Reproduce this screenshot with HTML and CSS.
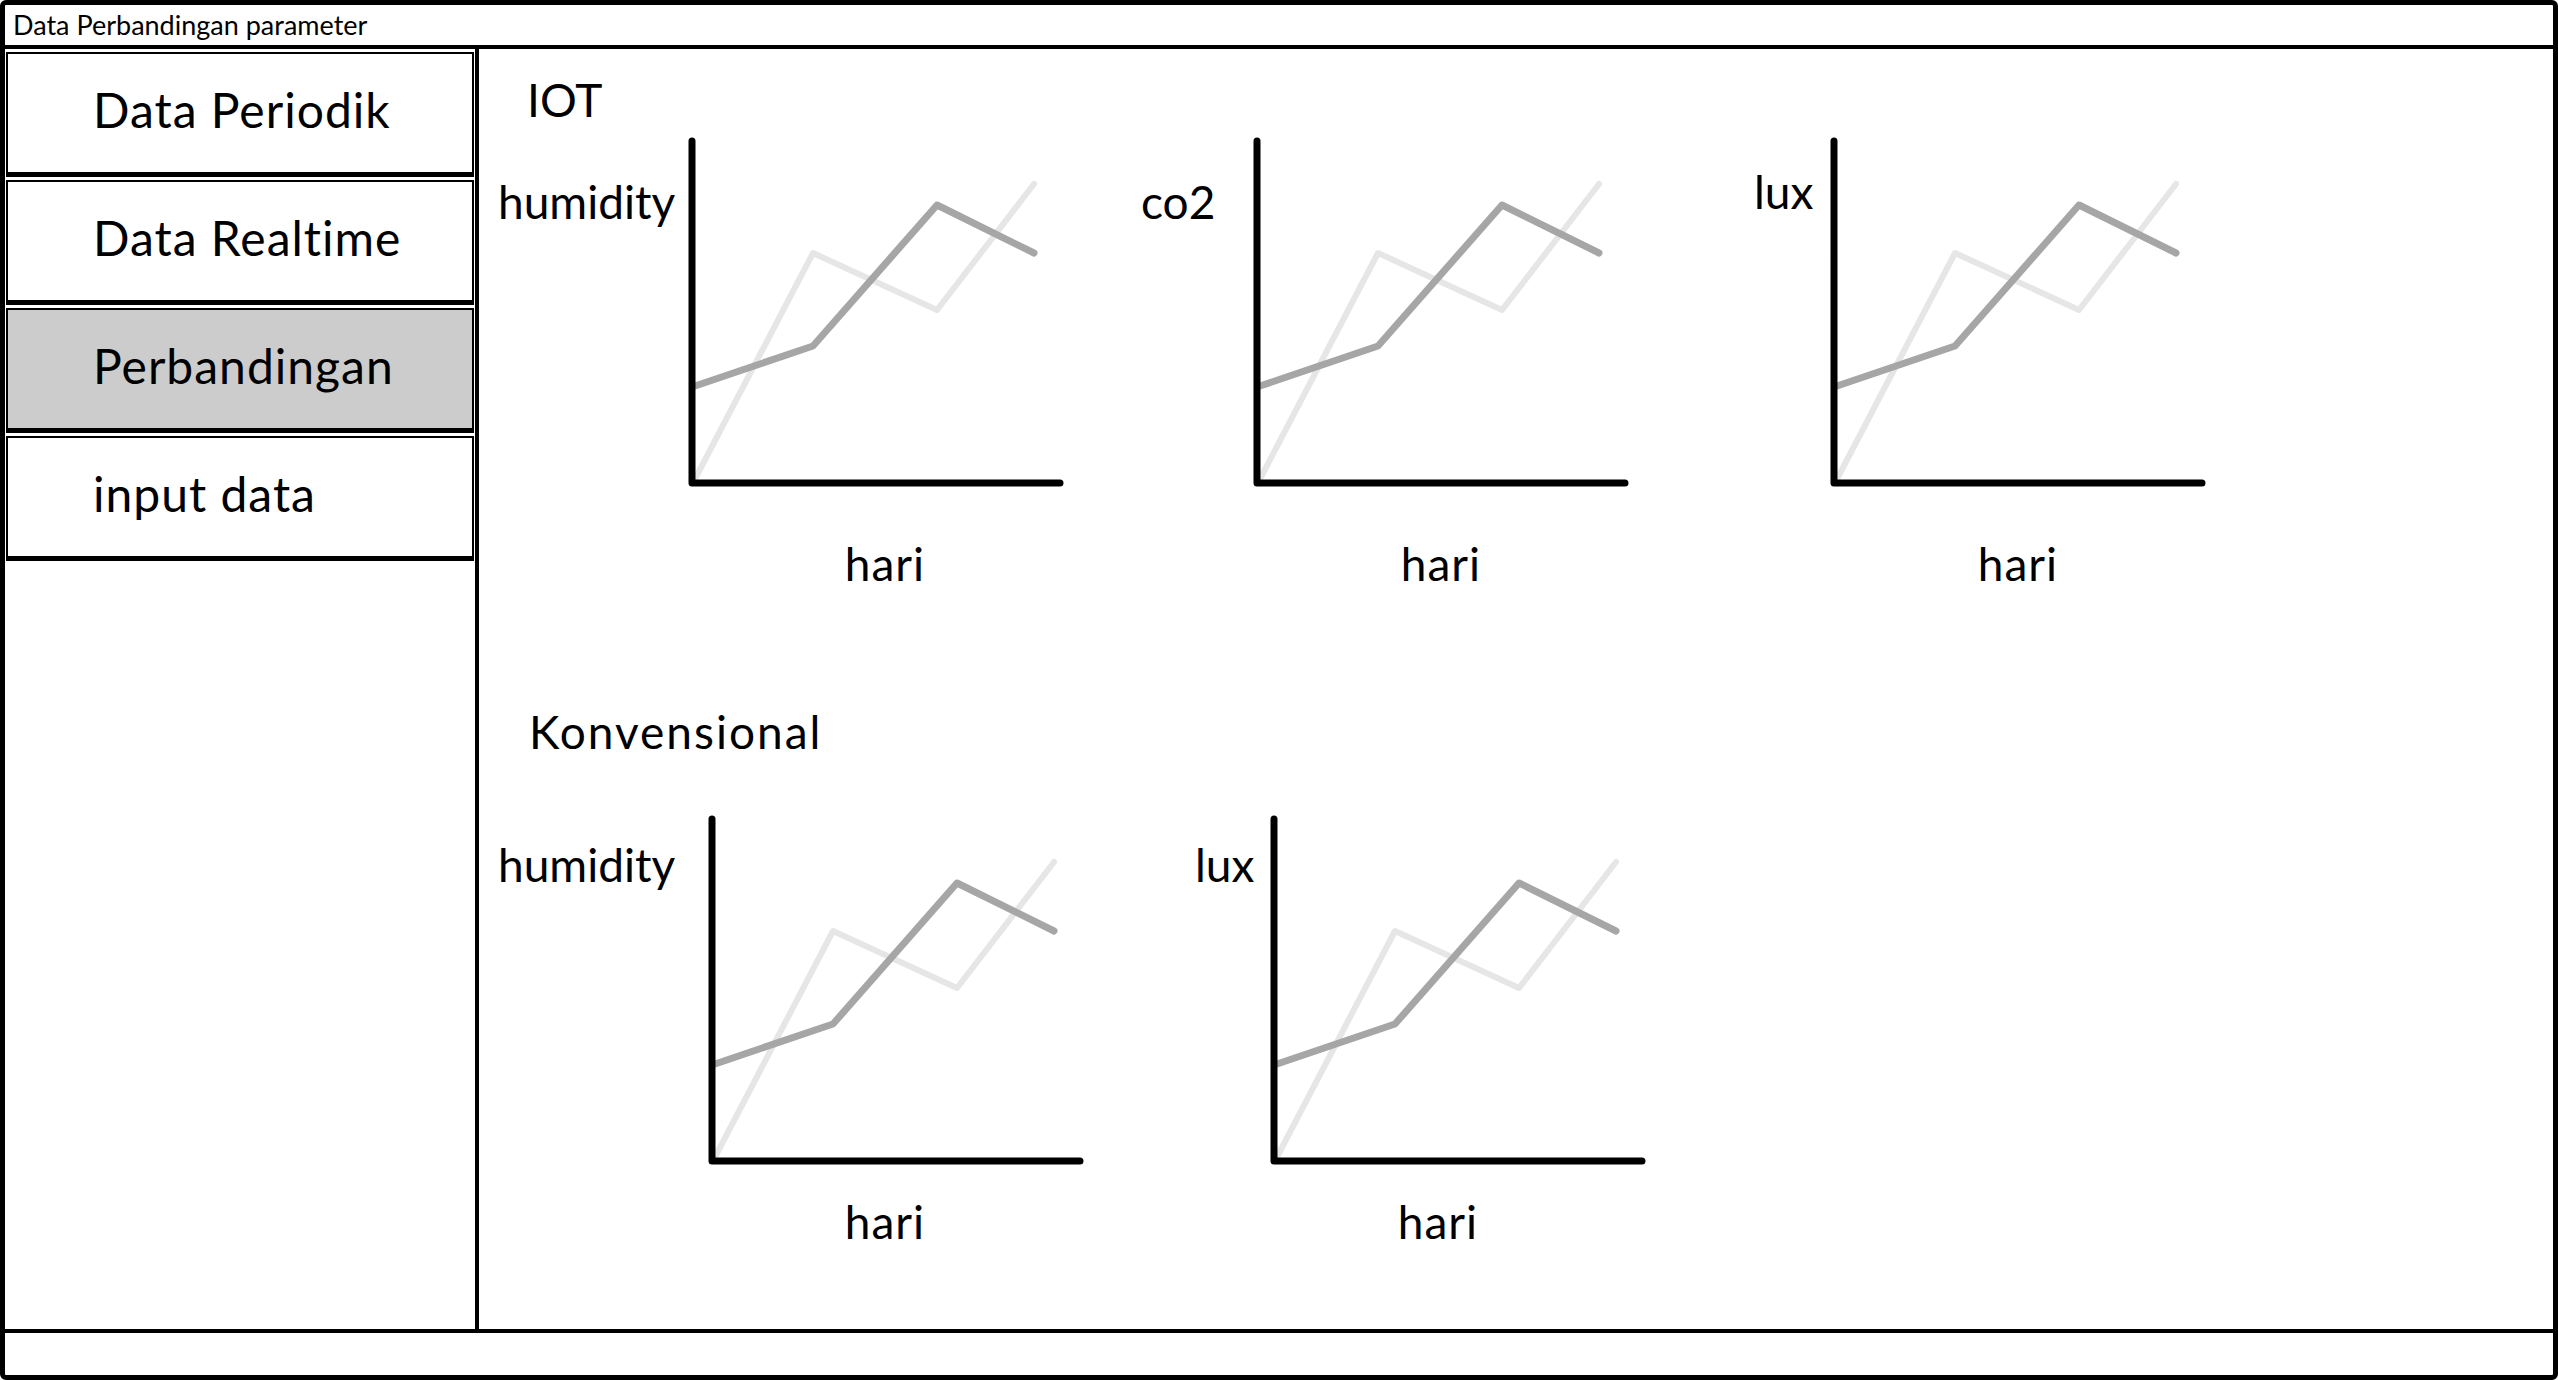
FILE: index.html
```html
<!DOCTYPE html>
<html lang="id">

<head>
    <meta charset="UTF-8">
    <title>Data Perbandingan parameter</title>
    <link rel="stylesheet" href="styles.css">
</head>

<body>
    <div class="window">
        <header class="titlebar">Data Perbandingan parameter</header>

        <div class="main">
            <!-- menu kiri -->
            <nav class="sidebar">
                <div class="nav-item">Data Periodik</div>
                <div class="nav-item">Data Realtime</div>
                <div class="nav-item active">Perbandingan</div>
                <div class="nav-item">input data</div>
            </nav>

            <section class="content">
                <h2 class="section-title">IOT</h2>
                <div class="chart-row iot">
                    <div class="chart hum-iot">
                        <span class="axis-label">humidity</span>
                        <div class="plot">
                            <svg class="graph" width="376" height="350" viewBox="0 0 376 350">
                                <polyline class="series-light" points="7,342 125,116 249,173 346,47" />
                                <polyline class="series-dark" points="7,249 125,209 249,68 346,116" />
                                <path class="axis" d="M4 4 V346 H372" />
                            </svg>
                            <span class="caption">hari</span>
                        </div>
                    </div>
                    <div class="chart co2">
                        <span class="axis-label">co2</span>
                        <div class="plot">
                            <svg class="graph" width="376" height="350" viewBox="0 0 376 350">
                                <polyline class="series-light" points="7,342 125,116 249,173 346,47" />
                                <polyline class="series-dark" points="7,249 125,209 249,68 346,116" />
                                <path class="axis" d="M4 4 V346 H372" />
                            </svg>
                            <span class="caption">hari</span>
                        </div>
                    </div>
                    <div class="chart lux-iot">
                        <span class="axis-label">lux</span>
                        <div class="plot">
                            <svg class="graph" width="376" height="350" viewBox="0 0 376 350">
                                <polyline class="series-light" points="7,342 125,116 249,173 346,47" />
                                <polyline class="series-dark" points="7,249 125,209 249,68 346,116" />
                                <path class="axis" d="M4 4 V346 H372" />
                            </svg>
                            <span class="caption">hari</span>
                        </div>
                    </div>
                </div>

                <h2 class="section-title konv">Konvensional</h2>
                <div class="chart-row konv">
                    <div class="chart hum-konv">
                        <span class="axis-label">humidity</span>
                        <div class="plot">
                            <svg class="graph" width="376" height="350" viewBox="0 0 376 350">
                                <polyline class="series-light" points="7,342 125,116 249,173 346,47" />
                                <polyline class="series-dark" points="7,249 125,209 249,68 346,116" />
                                <path class="axis" d="M4 4 V346 H372" />
                            </svg>
                            <span class="caption">hari</span>
                        </div>
                    </div>
                    <div class="chart lux-konv">
                        <span class="axis-label">lux</span>
                        <div class="plot">
                            <svg class="graph" width="376" height="350" viewBox="0 0 376 350">
                                <polyline class="series-light" points="7,342 125,116 249,173 346,47" />
                                <polyline class="series-dark" points="7,249 125,209 249,68 346,116" />
                                <path class="axis" d="M4 4 V346 H372" />
                            </svg>
                            <span class="caption">hari</span>
                        </div>
                    </div>
                </div>
            </section>
        </div>

        <footer class="statusbar"></footer>
    </div>
</body>

</html>
```

FILE: styles.css
```css
body {
    margin: 0;
    font-family: 'Lato', 'Open Sans', sans-serif;
    color: #000;
    background: #fff;
}

.window {
    box-sizing: border-box;
    width: 2558px;
    height: 1380px;
    border: 5px solid #000;
    border-radius: 6px;
    display: flex;
    flex-direction: column;
    overflow: hidden;
}

.titlebar {
    height: 40px;
    border-bottom: 4px solid #000;
    padding-left: 8px;
    font-size: 27px;
    line-height: 40px;
}

.main {
    flex: 1;
    display: flex;
    min-height: 0;
}

/* menu kiri */
.sidebar {
    width: 468px;
    border-right: 4px solid #000;
    padding: 3px 1px 0;
}

.nav-item {
    height: 111px;
    border: 2px solid #000;
    border-bottom-width: 5px;
    margin-bottom: 3px;
    padding-left: 85px;
    padding-bottom: 7px;
    box-sizing: content-box;
    display: flex;
    align-items: center;
    font-size: 48px;
    letter-spacing: 1px;
    background: #fff;
}

.nav-item.active {
    background: #cccccc;
}

/* isi grafik */
.content {
    flex: 1;
    padding: 23px 0 0 19px;
}

.section-title {
    margin: 0 0 9px 29px;
    font-size: 46px;
    font-weight: 400;
    line-height: 56px;
}

.section-title.konv {
    margin: 112px 0 55px 31px;
    letter-spacing: 2px;
}

.chart-row {
    display: flex;
    align-items: flex-start;
}

.chart {
    display: flex;
    align-items: flex-start;
}

.axis-label {
    font-size: 46px;
    line-height: 56px;
    margin-top: 37px;
}

.plot {
    display: flex;
    flex-direction: column;
    align-items: center;
}

.graph {
    display: block;
}

.caption {
    font-size: 46px;
    line-height: 56px;
    margin-top: 49px;
    letter-spacing: 1px;
}

.konv .caption {
    margin-top: 29px;
}

.konv .axis-label {
    margin-top: 22px;
}

.hum-iot .axis-label {
    width: 190px;
}

.hum-iot .caption {
    margin-left: 18px;
}

.co2 {
    margin-left: 77px;
}

.co2 .axis-label {
    width: 112px;
}

.lux-iot {
    margin-left: 125px;
}

.lux-iot .axis-label {
    width: 76px;
    margin-top: 27px;
}

.hum-konv .axis-label {
    width: 210px;
}

.hum-konv .caption {
    margin-right: 22px;
}

.lux-konv {
    margin-left: 111px;
}

.lux-konv .axis-label {
    width: 75px;
}

.lux-konv .caption {
    margin-right: 40px;
}

.axis {
    fill: none;
    stroke: #000;
    stroke-width: 7;
    stroke-linecap: round;
    stroke-linejoin: round;
}

.series-dark,
.series-light {
    fill: none;
    stroke-width: 7;
    stroke-linecap: round;
    stroke-linejoin: round;
}

.series-dark {
    stroke: #a6a6a6;
}

.series-light {
    stroke: #e6e6e6;
    stroke-width: 6;
}

.statusbar {
    height: 42px;
    border-top: 4px solid #000;
}
```
